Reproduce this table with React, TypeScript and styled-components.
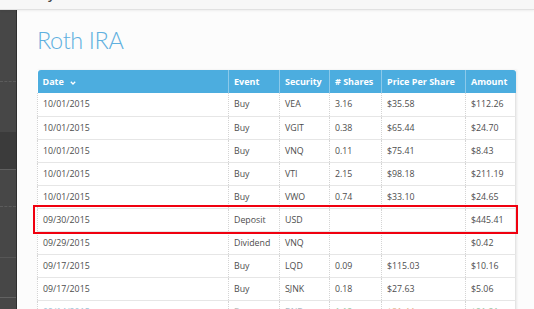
import React from "react";
import styled, { createGlobalStyle } from "styled-components";

const Global = createGlobalStyle`
  html, body { margin: 0; padding: 0; background: #fcfcfc; }
  body { font-family: "Open Sans", "Liberation Sans", sans-serif; overflow: hidden; }
`;

const Page = styled.div`
  width: 534px;
  height: 309px;
  display: flex;
  flex-direction: column;
  overflow: hidden;
`;

const Topbar = styled.div`
  height: 9px;
  flex: none;
  background: #f7f7f7;
  border-bottom: 1px solid #e1e1e1;
  box-shadow: 0 1px 2px rgba(0, 0, 0, 0.06);
  overflow: hidden;
  display: flex;
  padding-left: 48px;
  position: relative;
  z-index: 1;
`;

const Brand = styled.span`
  font-size: 13px;
  line-height: 13px;
  margin-top: -12px;
  color: #444;
  font-weight: 600;
`;

const Body = styled.div`
  flex: 1;
  display: flex;
  min-height: 0;
`;

const Sidebar = styled.nav`
  width: 16px;
  flex: none;
  background: #474747;
  border-right: 1px solid #2f2f2f;
  display: flex;
  flex-direction: column;
`;

const NavItem = styled.div<{ $h: number; $dark?: boolean; $line: string }>`
  height: ${(p) => p.$h}px;
  flex: none;
  box-sizing: border-box;
  background: ${(p) => (p.$dark ? "#3b3b3b" : "transparent")};
  border-bottom: ${(p) => p.$line};
`;

const Main = styled.main`
  flex: 1;
  padding: 0 19px 0 20px;
  background: #fcfcfc;
`;

const Title = styled.h1`
  margin: 8px 0 0 0;
  height: 52px;
  font-family: "Lato", "Open Sans", sans-serif;
  font-size: 23.5px;
  line-height: 44px;
  font-weight: 300;
  color: #5fb0df;
  letter-spacing: -0.4px;
`;

const TableWrap = styled.div`
  position: relative;
  width: 478px;
`;

const Table = styled.table`
  width: 478px;
  border-collapse: collapse;
  table-layout: fixed;
  background: #fff;
  box-shadow: 1px 0 2px rgba(0, 0, 0, 0.08);
`;

const Th = styled.th<{ $w: number }>`
  width: ${(p) => p.$w}px;
  height: 23px;
  box-sizing: border-box;
  padding: 0 0 0 5px;
  background: #4caddf;
  color: #fff;
  font-size: 9px;
  font-weight: 700;
  text-align: left;
  border-left: 1px solid #8cc9ea;
  white-space: nowrap;
  &:first-child { border-left: none; border-top-left-radius: 3px; }
  &:last-child { border-top-right-radius: 3px; }
`;

const Caret = styled.svg`
  margin-left: 6px;
  vertical-align: middle;
`;

const Tr = styled.tr``;

const Td = styled.td<{ $color?: string }>`
  height: 23px;
  box-sizing: border-box;
  padding: 0 0 0 5px;
  font-size: 8.8px;
  color: ${(p) => p.$color || "#4d4d4d"};
  border-bottom: 1px solid #e6e6e6;
  border-left: 1px dotted #d4d4d4;
  white-space: nowrap;
  &:first-child { border-left: 1px dotted #d4d4d4; }
  &:last-child { border-right: 1px solid #e4e4e4; }
`;

const Highlight = styled.div`
  position: absolute;
  left: -4px;
  right: -3px;
  top: 135px;
  height: 29px;
  box-sizing: border-box;
  border: 2px solid #f0000f;
  pointer-events: none;
`;

type Row = [string, string, string, string, string, string];

const rows: Row[] = [
  ["10/01/2015", "Buy", "VEA", "3.16", "$35.58", "$112.26"],
  ["10/01/2015", "Buy", "VGIT", "0.38", "$65.44", "$24.70"],
  ["10/01/2015", "Buy", "VNQ", "0.11", "$75.41", "$8.43"],
  ["10/01/2015", "Buy", "VTI", "2.15", "$98.18", "$211.19"],
  ["10/01/2015", "Buy", "VWO", "0.74", "$33.10", "$24.65"],
  ["09/30/2015", "Deposit", "USD", "", "", "$445.41"],
  ["09/29/2015", "Dividend", "VNQ", "", "", "$0.42"],
  ["09/17/2015", "Buy", "LQD", "0.09", "$115.03", "$10.16"],
  ["09/17/2015", "Buy", "SJNK", "0.18", "$27.63", "$5.06"],
];

const fadeRow: Row = ["09/14/2015", "Buy", "BND", "1.12", "$81.44", "$91.21"];
const fadeColors = ["#9fc3d8", "#bbb", "#aab6bf", "#9cc7a6", "#e0b38a", "#9cc7a6"];

const cols: [string, number][] = [
  ["Date", 191],
  ["Event", 51],
  ["Security", 50],
  ["# Shares", 52],
  ["Price Per Share", 84],
  ["Amount", 50],
];

export default function App() {
  return (
    <Page>
      <Global />
      <Topbar>
        <Brand>y</Brand>
      </Topbar>
      <Body>
        <Sidebar>
          <NavItem $h={72} $line="1px dashed #5c5c5c" />
          <NavItem $h={50} $line="none" />
          <NavItem $h={38} $dark $line="1px solid #5f5f5f" />
          <NavItem $h={37} $line="1px dashed #5c5c5c" />
          <NavItem $h={51} $line="1px solid #565656" />
          <NavItem $h={40} $line="1px solid #626262" />
        </Sidebar>
        <Main>
          <Title>Roth IRA</Title>
          <TableWrap>
            <Table>
              <thead>
                <tr>
                  {cols.map(([label, w], i) => (
                    <Th key={label} $w={w}>
                      {label}
                      {i === 0 && (
                        <Caret width="6" height="4" viewBox="0 0 6 4">
                          <path d="M0.8 0.8 L3 3 L5.2 0.8" stroke="#fff" strokeWidth="1.3" fill="none" />
                        </Caret>
                      )}
                    </Th>
                  ))}
                </tr>
              </thead>
              <tbody>
                {rows.map((r, i) => (
                  <Tr key={i}>
                    {r.map((c, j) => (
                      <Td key={j}>{c}</Td>
                    ))}
                  </Tr>
                ))}
                <Tr>
                  {fadeRow.map((c, j) => (
                    <Td key={j} $color={fadeColors[j]}>{c}</Td>
                  ))}
                </Tr>
              </tbody>
            </Table>
            <Highlight />
          </TableWrap>
        </Main>
      </Body>
    </Page>
  );
}
